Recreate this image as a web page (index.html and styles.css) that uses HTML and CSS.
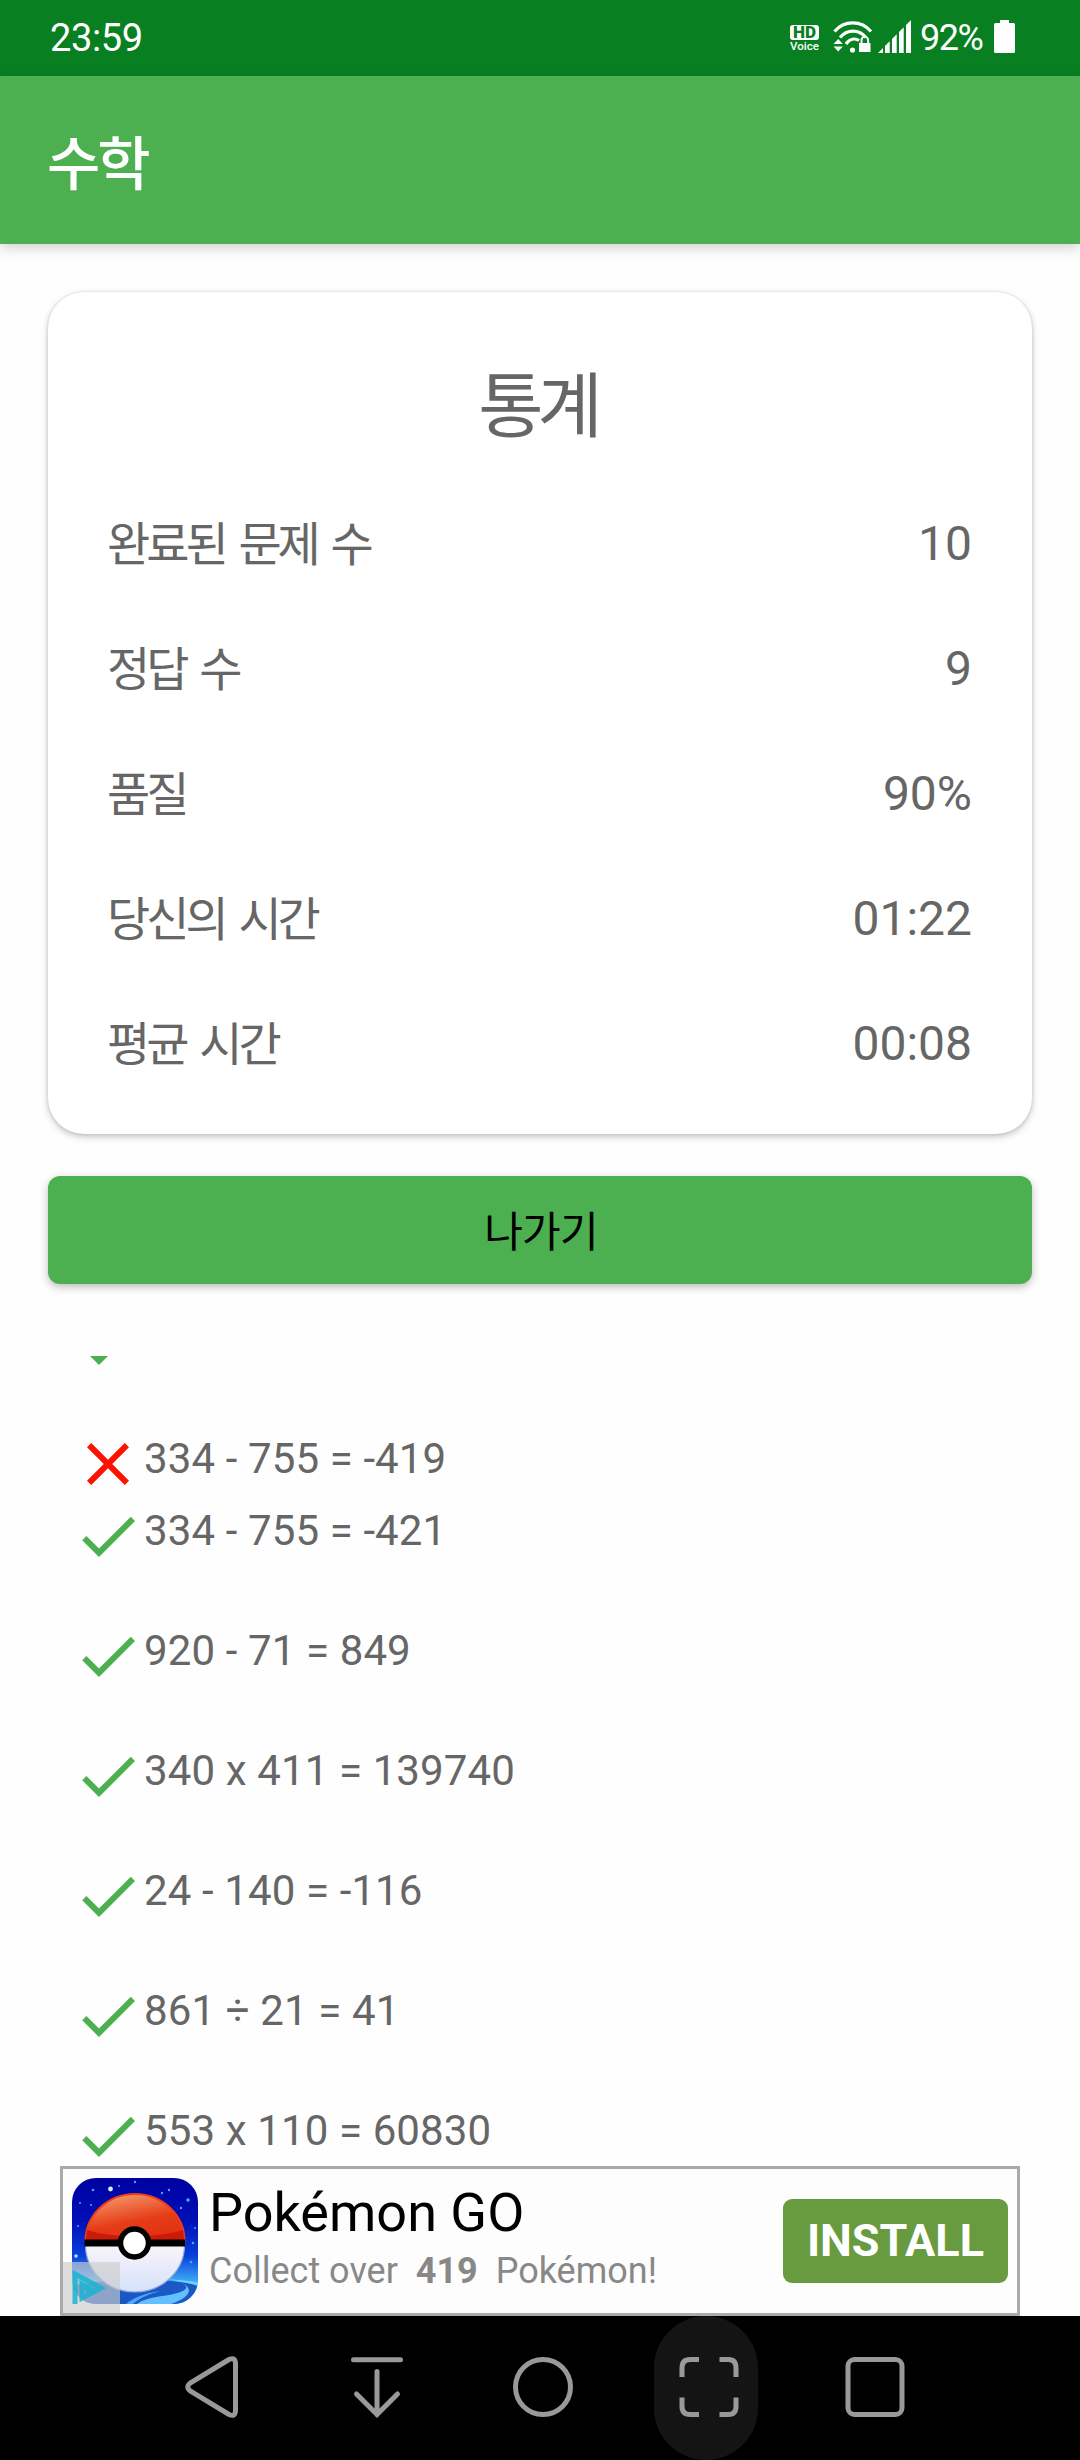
FILE: index.html
```html
<!DOCTYPE html>
<html lang="ko">
<head>
<meta charset="utf-8">
<title>수학</title>
<link rel="stylesheet" href="styles.css">
</head>
<body>
<svg class="defs" aria-hidden="true">
  <symbol id="check" viewBox="0 0 24 24"><path d="M9 16.17 4.83 12l-1.42 1.41L9 19 21 7l-1.41-1.41z"/></symbol>
  <symbol id="cross" viewBox="0 0 24 24"><path d="M19 6.41 17.59 5 12 10.59 6.41 5 5 6.41 10.59 12 5 17.59 6.41 19 12 13.41 17.59 19 19 17.59 13.41 12z"/></symbol>
</svg>
<div class="screen">
  <header class="status">
    <span class="clock">23:59</span>
    <span class="hd"><b>HD</b><i>Voice</i></span>
    <svg class="wifi" width="40" height="36" viewBox="0 0 40 36">
      <g fill="none" stroke="#fff" stroke-width="3.2">
        <path d="M1.5 12.5C11 1 28.500 1 38 12.500"/>
        <path d="M7 18.500C14 10 26 10 33 18.500"/>
        <path d="M13 25C17 19.500 22 19 26 21.500"/>
      </g>
      <circle cx="19.500" cy="31" r="2.600" fill="#fff"/>
      <path d="M.6 25 5.200 20l4.600 5zM.6 27.500h9.200l-4.600 5z" fill="#fff"/>
      <path d="M26 24h11.500v9H26z" fill="#fff"/>
      <path d="M28.500 25v-4a3.300 3.300 0 0 1 6.600 0v4" fill="none" stroke="#fff" stroke-width="2"/>
    </svg>
    <svg class="signal" width="33" height="33" viewBox="0 0 33 33" fill="#fff">
      <path d="M0 33 5 28v5zM7 26l4.700-4.700V33H7zM14 19l4.700-4.700V33H14zM21 12l4.700-4.700V33H21zM28 5l5-5v33h-5z"/>
    </svg>
    <span class="percent">92%</span>
    <svg class="battery" width="21" height="33" viewBox="0 0 21 33"><path fill="#fff" d="M6 0h9v3h4.500A1.500 1.500 0 0 1 21 4.500v27a1.500 1.500 0 0 1-1.500 1.500h-18A1.500 1.500 0 0 1 0 31.500v-27A1.500 1.500 0 0 1 1.500 3H6z"/></svg>
  </header>
  <div class="appbar"><h1>수학</h1></div>
  <main class="content">
    <section class="card">
      <h2>통계</h2>
      <dl>
        <div class="stat"><dt>완료된 문제 수</dt><dd>10</dd></div>
        <div class="stat"><dt>정답 수</dt><dd>9</dd></div>
        <div class="stat"><dt>품질</dt><dd>90%</dd></div>
        <div class="stat"><dt>당신의 시간</dt><dd>01:22</dd></div>
        <div class="stat"><dt>평균 시간</dt><dd>00:08</dd></div>
      </dl>
    </section>
    <button class="exit">나가기</button>
    <svg class="caret" width="18" height="9" viewBox="0 0 18 9"><path d="M0 0h18L9 9z"/></svg>
    <ul class="history">
      <li class="wrong"><svg><use href="#cross"/></svg>334 - 755 = -419</li>
      <li><svg><use href="#check"/></svg>334 - 755 = -421</li>
      <li><svg><use href="#check"/></svg>920 - 71 = 849</li>
      <li><svg><use href="#check"/></svg>340 x 411 = 139740</li>
      <li><svg><use href="#check"/></svg>24 - 140 = -116</li>
      <li><svg><use href="#check"/></svg>861 ÷ 21 = 41</li>
      <li><svg><use href="#check"/></svg>553 x 110 = 60830</li>
    </ul>
  </main>
  <aside class="ad">
    <svg class="ad-icon" width="126" height="126" viewBox="0 0 126 126">
      <defs>
        <linearGradient id="sky" x1="0" y1="0" x2="0" y2="1">
          <stop offset="0" stop-color="#0000a0"/><stop offset=".35" stop-color="#0010b8"/><stop offset=".62" stop-color="#0a40dc"/><stop offset=".84" stop-color="#42b4fa"/>
        </linearGradient>
        <linearGradient id="red" x1=".2" y1="0" x2=".6" y2="1">
          <stop offset="0" stop-color="#f2a070"/><stop offset=".25" stop-color="#ee7448"/><stop offset=".6" stop-color="#e63c18"/><stop offset="1" stop-color="#e23010"/>
        </linearGradient>
        <linearGradient id="white" x1="0" y1="0" x2="0" y2="1">
          <stop offset="0" stop-color="#faf4fa"/><stop offset="1" stop-color="#d4e2fa"/>
        </linearGradient>
        <clipPath id="tile"><rect width="126" height="126" rx="24"/></clipPath>
      </defs>
      <g clip-path="url(#tile)">
        <rect width="126" height="126" fill="url(#sky)"/>
        <path d="M0 108C30 101 90 99 126 107v19H0z" fill="#1c58c4"/>
        <path d="M98 101c32 8 10 15-8 17-12 2-20 4-25 8h34c24-8 24-20-1-25z" fill="#62c0ff"/>
        <path d="M88 113c-15 2-27 7-34 13h7c8-7 17-10 27-13z" fill="#4aa8f8"/>
        <path d="M96 101c14 2 24 1 30 4v3c-8-3-18-4-30-7z" fill="#6cd4ff"/>
        <g fill="#48a8f4">
          <circle cx="38.500" cy="11" r="2.400" fill="#c8f4ff"/><circle cx="21" cy="12" r="1.300"/><circle cx="63" cy="4" r="1.200"/>
          <circle cx="90" cy="15" r="1.200"/><circle cx="97" cy="12" r="1.200"/><circle cx="116" cy="22" r="1.800"/><circle cx="109" cy="30" r="1.200"/>
          <circle cx="19" cy="27" r="1"/><circle cx="8" cy="25" r="1"/><circle cx="4" cy="78" r="1.700" fill="#b0ecff"/>
          <circle cx="121" cy="65" r="1.300"/><circle cx="119" cy="84" r="1.300"/><circle cx="123" cy="50" r="1"/><circle cx="6" cy="48" r="1"/><circle cx="47" cy="8" r="1"/>
        </g>
        <path d="M13.500 67a49.500 47 0 0 0 99 0z" fill="url(#white)" stroke="#90a8d8" stroke-width="1.200"/>
        <path d="M13.500 63a49.500 47 0 0 1 99 0z" fill="url(#red)" stroke="#f03c18" stroke-width="2"/>
        <path d="M15 52c24 8 72 8 96 0l1 10H14z" fill="#cc1a08"/>
        <path d="M12.500 61.500h100.500v7H12.500z"/>
        <circle cx="62.500" cy="65" r="14" fill="#fff" stroke="#000" stroke-width="5.500"/>
      </g>
    </svg>
    <div class="ad-copy">
      <strong>Pokémon GO</strong>
      <p>Collect over <b>419</b> Pokémon!</p>
    </div>
    <span class="install">INSTALL</span>
    <svg class="adchoices" width="57" height="51" viewBox="0 0 57 51"><path d="M0 0h57v51H0z" fill="#ccc" fill-opacity=".65"/><path d="M12 42V12L38 26 19 36V22l8 4.500-4 2.500" fill="none" stroke="#18b4d0" stroke-width="5" stroke-opacity=".85"/></svg>
  </aside>
  <nav class="nav">
    <span><svg viewBox="0 0 72 72"><path d="M54 8.500 16 31.500Q9.500 36 16 40.500L54 63.500Q60.500 66.500 60.500 59V13Q60.500 5.500 54 8.500z"/></svg></span>
    <span><svg viewBox="0 0 72 72"><path stroke-linecap="round" d="M12.500 8.700h47M36 20.500v43M15.500 43 36 63.500 56.500 43"/></svg></span>
    <span><svg viewBox="0 0 72 72"><circle cx="36" cy="36" r="27.500"/></svg></span>
    <span class="active"><svg viewBox="0 0 72 72"><path d="M9 26v-9q0-8.500 8-8.500h9M46.500 8.500h9q7.500 0 7.500 8.500v9M63 46.500V55q0 8.500-7.500 8.500h-9M26 63.500h-9q-8 0-8-8.500v-8.500"/></svg></span>
    <span><svg viewBox="0 0 72 72"><rect x="9" y="8.500" width="54" height="55" rx="6.500"/></svg></span>
  </nav>
</div>
</body>
</html>
```
FILE: styles.css
```css
* { box-sizing: border-box; margin: 0; padding: 0; }
body { background: #fefefe; font-family: Roboto, "Noto Sans CJK KR", sans-serif; color: #666; }
.defs { display: none; }
svg { display: block; flex: none; }
.screen { width: 1080px; height: 2460px; display: flex; flex-direction: column; overflow: hidden; }

.status { height: 76px; background: #088022; color: #fff; display: flex; align-items: flex-start; padding-left: 50px; flex: none; }
.clock { width: 740px; font-size: 38px; line-height: 77px; letter-spacing: -.4px; }
.hd { width: 29px; margin-top: 25px; display: flex; flex-direction: column; align-items: center; }
.hd b { width: 29px; height: 15px; border-radius: 3px; background: #fff; color: #088022; font-size: 17px; font-weight: 900; line-height: 15.500px; text-align: center; }
.hd i { font-style: normal; font-weight: 500; font-size: 11.500px; line-height: 12px; }
.wifi { margin: 19px 0 0 14px; }
.signal { margin: 20px 0 0 5px; }
.percent { width: 75px; padding-left: 9px; font-size: 36px; line-height: 76px; letter-spacing: -1.500px; white-space: nowrap; }
.battery { margin: 20px 0 0 8px; }

.appbar { height: 168px; background: #4caf50; color: #fff; padding: 5px 47px 0; flex: none; box-shadow: 0 3px 13px rgba(0,0,0,.2); position: relative; }
.appbar h1 { font-size: 58px; font-weight: 500; line-height: 168px; letter-spacing: -3px; }

.content { flex: 1; min-height: 0; overflow: hidden; padding: 48px 48px 0; display: flex; flex-direction: column; align-items: stretch; }
.card { height: 842px; flex: none; border-radius: 36px; background: #fff; padding: 67px 60px 0; box-shadow: 0 3px 7px rgba(0,0,0,.22), 0 0 3px rgba(0,0,0,.14); }
.card h2 { font-size: 71px; font-weight: 400; line-height: 96px; margin-bottom: 26px; padding-right: 5px; text-align: center; letter-spacing: -6px; }
.stat { height: 125px; display: flex; justify-content: space-between; font-size: 48px; line-height: 125px; }
.stat dt { font-size: 47px; line-height: 128px; margin-left: -1px; letter-spacing: -4px; word-spacing: 6px; }
.exit { height: 108px; flex: none; margin-top: 42px; border: 0; border-radius: 12px; background: #4caf50; color: #000; font: 400 42px/108px Roboto, "Noto Sans CJK KR", sans-serif; padding: 3px 0 0 2px; letter-spacing: -.8px; box-shadow: 0 3px 8px rgba(0,0,0,.26); }
.caret { margin: 72px 0 0 42px; fill: #4caf50; }
.history { list-style: none; margin-top: 57px; padding-left: 24px; display: flex; flex-direction: column; gap: 48px; }
.history li { height: 72px; flex: none; display: flex; font-size: 42px; line-height: 73px; letter-spacing: .12px; }
.history svg { width: 72px; height: 72px; margin-top: 6px; fill: #4caf50; }
.history .wrong { margin-bottom: -48px; }
.history .wrong svg { fill: #ff1100; }

.ad { position: relative; height: 150px; flex: none; margin: 0 60px; border: 3px solid #aaa; background: #fdfdfd; display: flex; align-items: flex-start; padding: 9px; }
.ad-copy { flex: 1; padding-left: 11px; white-space: nowrap; }
.ad-copy strong { display: block; font-weight: 400; font-size: 54px; line-height: 70px; color: #000; }
.ad-copy p { font-size: 36px; line-height: 46px; color: #888; }
.ad-copy b { margin: 0 9px; }
.install { width: 225px; height: 84px; margin-top: 21px; border-radius: 9px; background: #689a40; color: #fff; font-size: 45px; font-weight: 700; line-height: 83px; text-align: center; }
.adchoices { position: absolute; left: 0; bottom: 0; }

.nav { height: 144px; flex: none; background: #000; padding-left: 159px; display: flex; gap: 62px; }
.nav span { width: 104px; flex: none; display: flex; align-items: center; justify-content: center; }
.nav svg { width: 72px; height: 72px; margin-top: -2px; fill: none; stroke: #999; stroke-width: 5; }
.nav .active { background: #141414; border-radius: 52px; margin: 0 3px 0 -3px; padding-left: 6px; }
```
